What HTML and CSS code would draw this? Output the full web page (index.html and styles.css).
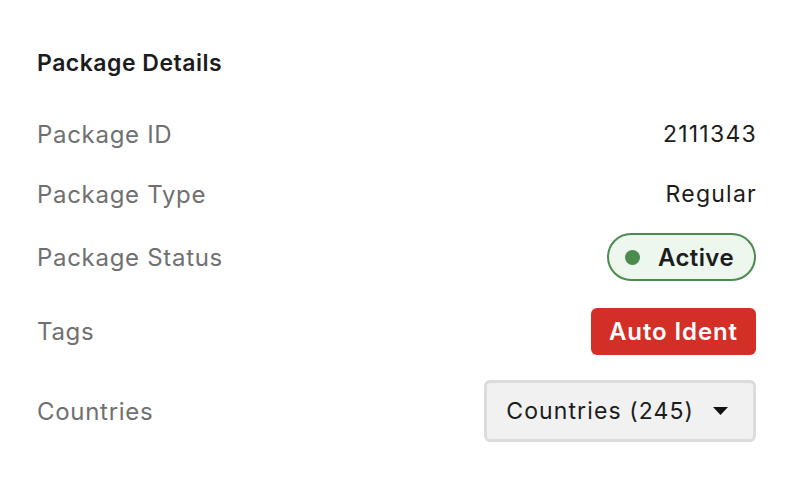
FILE: index.html
```html
<!DOCTYPE html>
<html>
<head>
<meta charset="utf-8">
<link rel="stylesheet" href="styles.css">
</head>
<body>
<section class="card">
  <h2 class="title">Package Details</h2>
  <div class="row row-id">
    <span class="label">Package ID</span>
    <span class="value">2111343</span>
  </div>
  <div class="row row-type">
    <span class="label">Package Type</span>
    <span class="value">Regular</span>
  </div>
  <div class="row row-status">
    <span class="label">Package Status</span>
    <span class="status"><span class="dot"></span>Active</span>
  </div>
  <div class="row row-tags">
    <span class="label">Tags</span>
    <span class="tag">Auto Ident</span>
  </div>
  <div class="row row-countries">
    <span class="label">Countries</span>
    <button class="select"><span class="select-text">Countries (245)</span><svg class="caret" width="15" height="8" viewBox="0 0 15 8"><path d="M0 0h15L7.5 8z" fill="#111"/></svg></button>
  </div>
</section>
</body>
</html>
```
FILE: styles.css
```css
html, body {
  margin: 0;
  padding: 0;
  background: #fff;
}
body {
  font-family: Inter, "Noto Sans", sans-serif;
  color: #1c1c1c;
}
.card {
  width: 792px;
  box-sizing: border-box;
  padding: 47px 36px 0 37px;
}
.title {
  margin: 0;
  font-size: 23px;
  font-weight: 600;
  letter-spacing: 0.5px;
  line-height: 32px;
  color: #1c1c1c;
}
.row {
  display: flex;
  justify-content: space-between;
  align-items: center;
}
.label {
  font-size: 24px;
  letter-spacing: 0.7px;
  color: #707070;
}
.value {
  font-size: 23px;
  letter-spacing: 1.25px;
  margin-right: -1px;
  color: #1c1c1c;
}
.row-id { margin-top: 35px; height: 40px; }
.row-type { margin-top: 20px; height: 40px; }
.row-status { margin-top: 19px; height: 48px; }
.row-tags { margin-top: 27px; height: 47px; }
.row-countries { margin-top: 25px; height: 62px; }
.status {
  display: flex;
  align-items: center;
  box-sizing: border-box;
  height: 48px;
  padding: 0 20px 0 16px;
  border: 2px solid #4b8b4e;
  border-radius: 24px;
  background: #edf7ee;
  font-size: 24px;
  font-weight: 600;
  letter-spacing: 0.4px;
  color: #1c1c1c;
}
.dot {
  width: 15px;
  height: 15px;
  border-radius: 50%;
  background: #4b8b4e;
  margin-right: 18px;
}
.tag {
  display: flex;
  align-items: center;
  box-sizing: border-box;
  height: 47px;
  padding: 0 18px 0 18px;
  border-radius: 6px;
  background: #d32f27;
  color: #fff;
  font-size: 24px;
  font-weight: 600;
  letter-spacing: 0.9px;
}
.select {
  display: flex;
  align-items: center;
  box-sizing: border-box;
  height: 62px;
  padding: 0 25px 0 19px;
  border: 3px solid #dcdcdc;
  border-radius: 6px;
  background: #f1f1f1;
  font-family: inherit;
  font-size: 23px;
  letter-spacing: 1.1px;
  color: #1c1c1c;
}
.caret {
  margin-left: 19px;
}
```
